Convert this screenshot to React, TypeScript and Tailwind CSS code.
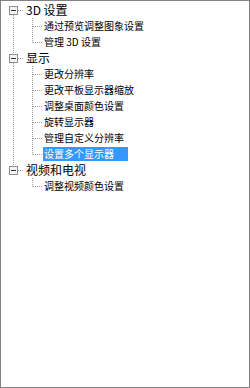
import React from "react";

type Row = {
  t: string;
  top?: boolean;
  first?: boolean;
  lastTop?: boolean;
  last?: boolean;
  parentLast?: boolean;
  selected?: boolean;
};

const rows: Row[] = [
  { t: "3D 设置", top: true, first: true },
  { t: "通过预览调整图象设置" },
  { t: "管理 3D 设置", last: true },
  { t: "显示", top: true },
  { t: "更改分辨率" },
  { t: "更改平板显示器缩放" },
  { t: "调整桌面颜色设置" },
  { t: "旋转显示器" },
  { t: "管理自定义分辨率" },
  { t: "设置多个显示器", last: true, selected: true },
  { t: "视频和电视", top: true, lastTop: true },
  { t: "调整视频颜色设置", last: true, parentLast: true },
];

const DOT = "#a0a0a0";

function TopGuide({ r }: { r: Row }) {
  return (
    <svg width="24" height="16" viewBox="0 0 24 16" className="shrink-0 block">
      {!r.first && <line x1="12.5" y1="0" x2="12.5" y2="4" stroke={DOT} strokeDasharray="1 1" />}
      {!r.lastTop && <line x1="12.5" y1="13" x2="12.5" y2="16" stroke={DOT} strokeDasharray="1 1" />}
      <line x1="17" y1="8.5" x2="23" y2="8.5" stroke={DOT} strokeDasharray="1 1" />
      <rect x="8.5" y="4.5" width="8" height="8" fill="#f4f4f4" stroke="#8e8f8f" />
      <line x1="10" y1="8.5" x2="15" y2="8.5" stroke="#333" />
    </svg>
  );
}

function ChildGuide({ r }: { r: Row }) {
  return (
    <svg width="42" height="16" viewBox="0 0 42 16" className="shrink-0 block">
      {!r.parentLast && <line x1="12.5" y1="0" x2="12.5" y2="16" stroke={DOT} strokeDasharray="1 1" />}
      <line x1="31.5" y1="0" x2="31.5" y2={r.last ? 9 : 16} stroke={DOT} strokeDasharray="1 1" />
      <line x1="32" y1="8.5" x2="41" y2="8.5" stroke={DOT} strokeDasharray="1 1" />
    </svg>
  );
}

export default function App() {
  return (
    <div
      className="w-[250px] h-[388px] border border-[#828282] bg-white pt-[1px] overflow-hidden"
      style={{ fontFamily: '"Noto Sans CJK SC", "Noto Sans", sans-serif' }}
    >
      {rows.map((r, i) =>
        r.top ? (
          <div key={i} className="flex items-center h-[16px]">
            <TopGuide r={r} />
            <span className="ml-[1px] text-[12px] leading-[16px] text-black whitespace-pre">{r.t}</span>
          </div>
        ) : (
          <div key={i} className="flex items-center h-[16px]">
            <ChildGuide r={r} />
            <span
              className={
                r.selected
                  ? "h-[14px] pl-[1px] pr-[14px] text-[10px] leading-[14px] bg-[#3399ff] text-white whitespace-pre"
                  : "h-[14px] pl-[1px] text-[10px] leading-[14px] text-black whitespace-pre"
              }
            >
              {r.t}
            </span>
          </div>
        )
      )}
    </div>
  );
}
